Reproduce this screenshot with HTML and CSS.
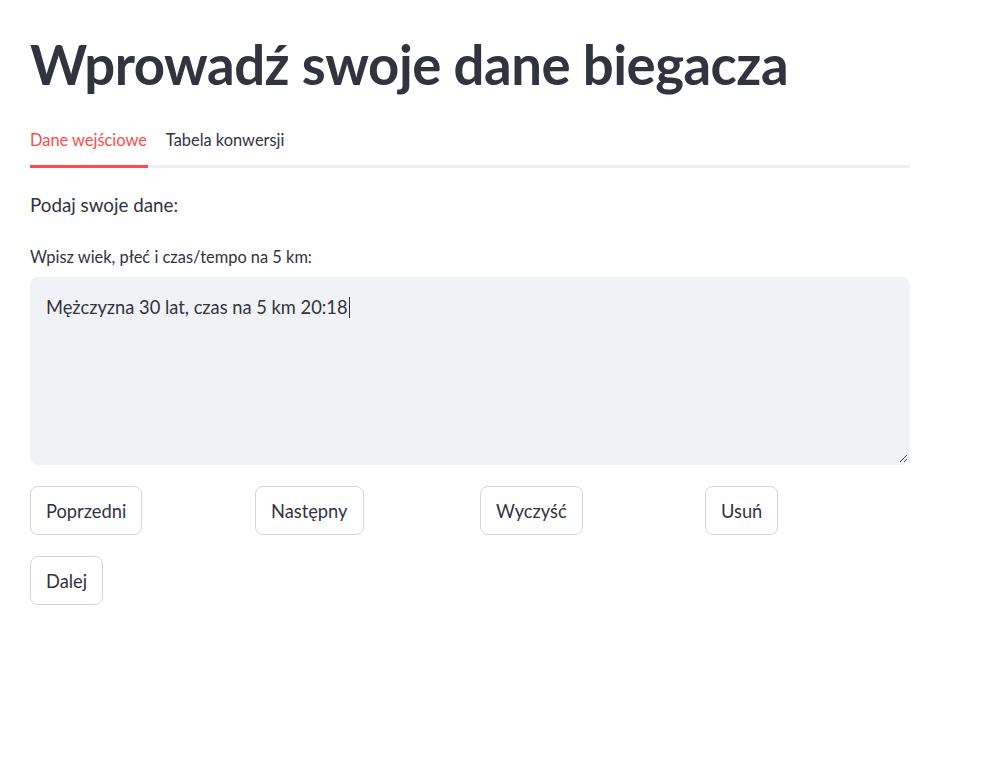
FILE: index.html
```html
<!DOCTYPE html>
<html lang="pl">
<head>
<meta charset="utf-8">
<link rel="stylesheet" href="styles.css">
</head>
<body>
<main class="main">
  <h1 class="title">Wprowadź swoje dane biegacza</h1>
  <div class="tabs">
    <div class="tab active">Dane wejściowe</div>
    <div class="tab">Tabela konwersji</div>
  </div>
  <p class="lead">Podaj swoje dane:</p>
  <label class="label">Wpisz wiek, płeć i czas/tempo na 5 km:</label>
  <div class="textarea">
    <span class="value">Mężczyzna 30 lat, czas na 5 km 20:18</span><span class="caret"></span>
    <svg class="resize" width="9" height="9" viewBox="0 0 9 9"><path d="M8 1L1 8M8 5L5 8" stroke="#444" stroke-width="1"/></svg>
  </div>
  <div class="buttons">
    <div class="col"><button class="btn">Poprzedni</button></div>
    <div class="col"><button class="btn">Następny</button></div>
    <div class="col"><button class="btn">Wyczyść</button></div>
    <div class="col"><button class="btn">Usuń</button></div>
  </div>
  <div class="row2"><button class="btn">Dalej</button></div>
</main>
</body>
</html>
```
FILE: styles.css
```css
* { box-sizing: border-box; }
html, body { margin: 0; padding: 0; background: #fff; }
body { font-family: "Lato", "Noto Sans", sans-serif; color: #31333f; }
.main { width: 880px; margin-left: 30px; padding-top: 28px; }
.title { margin: 0; font-size: 54.5px; font-weight: 700; line-height: 72px; letter-spacing: -0.5px; color: #31333f; }
.tabs { display: flex; gap: 18px; margin-top: 18px; border-bottom: 3px solid #eeeef0; height: 50px; align-items: flex-start; }
.tab { font-size: 16.4px; padding-top: 12px; height: 50px; color: #31333f; }
.tab.active { color: #ff4b4b; border-bottom: 3px solid #ff4b4b; margin-bottom: -3px; height: 50px; padding-right: 1px; }
.lead { margin: 24px 0 0; font-size: 18.8px; line-height: 26px; }
.label { display: block; margin-top: 29px; font-size: 16.4px; line-height: 20px; }
.textarea { position: relative; margin-top: 10px; height: 188px; background: #f0f2f6; border-radius: 8px; padding: 18px 16px; font-size: 18.3px; line-height: 24px; }
.caret { display: inline-block; width: 1px; height: 21px; background: #31333f; vertical-align: -4px; margin-left: 1px; }
.resize { position: absolute; right: 2px; bottom: 2px; }
.buttons { display: grid; grid-template-columns: repeat(4, 1fr); gap: 20px; margin-top: 21px; }
.btn { font-family: inherit; font-size: 18.3px; color: #31333f; background: #fff; border: 1px solid #d6d6d9; border-radius: 8px; height: 49px; padding: 0 15px; cursor: pointer; }
.row2 { margin-top: 21px; }
```
